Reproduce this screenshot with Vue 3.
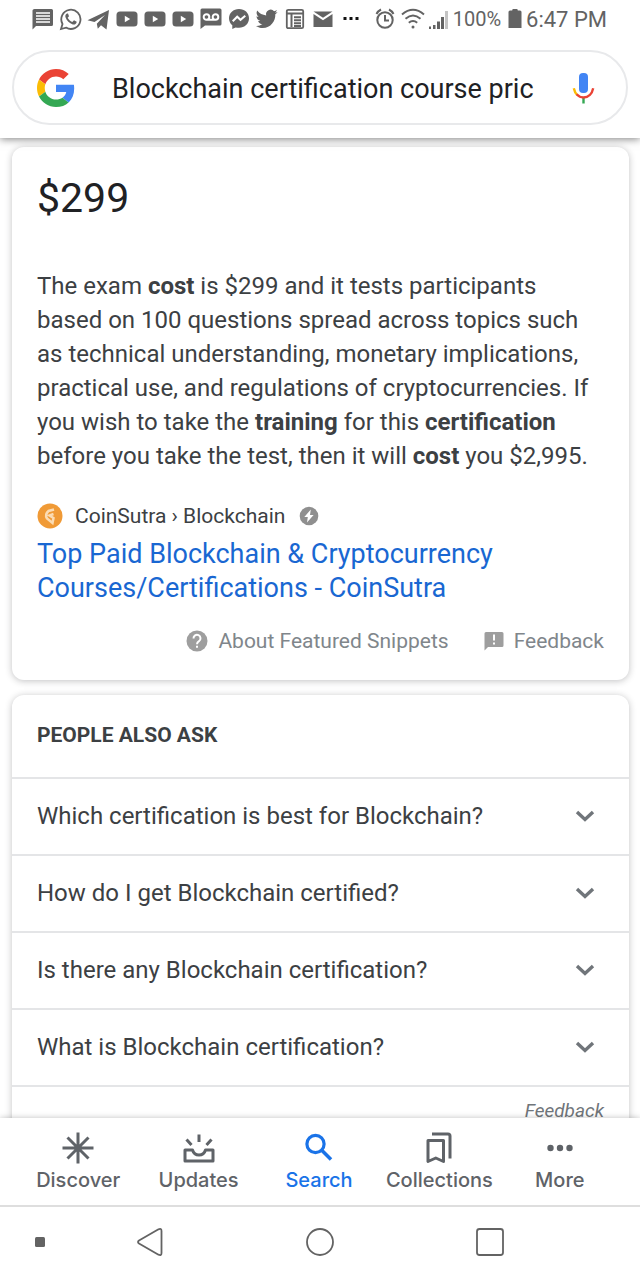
<script setup>
import { ref } from 'vue'

const query = ref('Blockchain certification course pric')
const questions = [
  'Which certification is best for Blockchain?',
  'How do I get Blockchain certified?',
  'Is there any Blockchain certification?',
  'What is Blockchain certification?',
]
</script>

<template>
  <div class="screen">
    <div class="status">
      <div class="notifications">
        <svg viewBox="0 0 24 24"><path fill="currentColor" d="M3.500 2h17q1.500 0 1.500 1.500v14q0 1.500-1.500 1.500H5l-3.500 3.500V3.500Q1.500 2 3.500 2z" /><path stroke="#fff" stroke-width="1.500" d="M5 6h14M5 9h14M5 12h14M5 15h14" /></svg>
        <svg viewBox="0 0 24 24"><path fill="none" stroke="currentColor" stroke-width="1.800" d="M2 22l1.500-5A9.600 9.600 0 1 1 7 20.600z" /><path fill="currentColor" d="M8 6.500c-1.500.8-2 2.200-1.500 3.800 1.200 3.400 4 6.100 7.300 7.100 2 .5 3.700-.5 3.900-2.700l-2.700-1.500-1.700 1.700c-2.100-.8-3.700-2.300-4.600-4.200L10 9.200 9 6.500z" /></svg>
        <svg viewBox="0 0 24 24"><path fill="currentColor" d="M.5 13.300 22 3 19.500 22.500l-5.500-4.300-3.200 3.500-1-5L18 8 7.500 15z" /></svg>
        <svg v-for="n in 3" :key="n" viewBox="0 0 24 24"><rect x="1.500" y="4.500" width="21" height="15" rx="3.500" fill="currentColor" /><path fill="#fff" d="M9.800 8.800v6.400l5.400-3.200z" /></svg>
        <svg viewBox="0 0 24 24"><path fill="currentColor" d="M3 1.500h18q1.500 0 1.500 1.500v14q0 1.500-1.500 1.500H6L1.500 22V3q0-1.500 1.500-1.500z" /><path fill="none" stroke="#fff" stroke-width="2" d="M7.500 12.800h9M7.500 7.200a2.800 2.800 0 1 0 0 5.600a2.800 2.800 0 1 0 0-5.600M16.500 7.200a2.800 2.800 0 1 0 0 5.600a2.800 2.800 0 1 0 0-5.600" /></svg>
        <svg viewBox="0 0 24 24"><path fill="currentColor" d="M12 2C6.300 2 2 6 2 11.300c0 2.900 1.300 5.400 3.300 7V22l3.300-1.600q1.600.4 3.400.4c5.700 0 10-4 10-9.500S17.700 2 12 2z" /><path fill="none" stroke="#fff" stroke-width="2" d="M5.700 14.200l4.500-4.500 3.300 3.100 4.800-4.100" /></svg>
        <svg viewBox="0 0 24 24"><path fill="currentColor" d="M22.600 4.900c-.8.4-1.700.6-2.600.7.900-.6 1.600-1.500 2-2.500-.9.500-1.900.9-2.900 1.100a4.600 4.600 0 0 0-7.900 4.200C7.400 8.200 4.500 6.400 2.200 3.600c-1.200 2.100-.6 4.800 1.400 6.200-.7 0-1.400-.2-2.100-.6 0 2.200 1.500 4.200 3.700 4.600-.7.200-1.400.2-2.100.1.600 1.800 2.300 3.100 4.300 3.200A9.200 9.200 0 0 1 .9 19c2.100 1.300 4.200 2.100 6.800 2.100 8.100 0 13-7.300 12.600-13.800.9-.6 1.700-1.500 2.300-2.400z" /></svg>
        <svg viewBox="0 0 24 24"><rect x="3.800" y="2.800" width="16.400" height="18.400" rx="1.500" fill="none" stroke="currentColor" stroke-width="1.800" /><path stroke="currentColor" stroke-width="2" fill="none" d="M4 6.500h16M8.500 7v13M11 10.200h7M11 13.200h7M11 16.200h7M11 19h7" /></svg>
        <svg viewBox="0 0 24 24"><path fill="currentColor" d="M2.500 4.500h19L12 10.800zM2.500 7l9.500 6.300L21.500 7v13h-19z" /></svg>
        <svg class="overflow" viewBox="0 0 24 24"><path fill="#111" d="M4.500 10h3v3h-3zM10.500 10h3v3h-3zM16.500 10h3v3h-3z" /></svg>
      </div>
      <div class="system">
        <svg viewBox="0 0 24 24"><circle cx="12" cy="13" r="7.700" fill="none" stroke="currentColor" stroke-width="2" /><path fill="none" stroke="currentColor" stroke-width="2" d="M12 8v5.500h4M3.500 7q1.500-3 4.500-4.500M20.500 7q-1.500-3-4.500-4.500" /></svg>
        <svg viewBox="0 0 24 24"><path fill="none" stroke="currentColor" stroke-width="2" d="M1 7.500q11-9.500 22 0M4.500 11.700q7.500-6.500 15 0M7.800 15.700q4.200-3.500 8.400 0" /><circle cx="12" cy="20" r="1.500" fill="currentColor" /></svg>
        <svg class="signal" viewBox="0 0 20 24"><path fill="currentColor" d="M0 19.500h2V22H0zM4 18h2.500v4H4zM8 14.500h3V22H8zM12 10h3v12h-3z" /><path fill="#c4c4c4" d="M16 4h3v18h-3z" /></svg>
        <span>100%</span>
        <svg class="battery" viewBox="0 0 14 24"><path fill="currentColor" d="M5 2h4q.8 0 .8 1.500H12q1.500 0 1.500 1.500v16H.5V5Q.5 3.500 2 3.500h2.200Q4.200 2 5 2z" /></svg>
        <time>6:47 PM</time>
      </div>
    </div>

    <header class="header">
      <form class="search" role="search" @submit.prevent>
        <svg class="g-logo" viewBox="0 0 48 48" role="img" aria-label="Google">
          <path fill="#ea4335" d="M24 9.500c3.540 0 6.710 1.220 9.210 3.600l6.850-6.850C35.900 2.380 30.470 0 24 0 14.620 0 6.510 5.380 2.560 13.220l7.980 6.190C12.430 13.720 17.740 9.500 24 9.500z" />
          <path fill="#4285f4" d="M46.980 24.550c0-1.570-.15-3.090-.38-4.550H24v9.020h12.940c-.58 2.960-2.260 5.480-4.780 7.180l7.730 6c4.510-4.180 7.090-10.360 7.090-17.650z" />
          <path fill="#fbbc05" d="M10.530 28.590c-.48-1.450-.76-2.990-.76-4.590s.27-3.140.76-4.590l-7.980-6.190C.92 16.460 0 20.120 0 24c0 3.880.92 7.540 2.560 10.780l7.970-6.190z" />
          <path fill="#34a853" d="M24 48c6.480 0 11.930-2.130 15.890-5.810l-7.730-6c-2.150 1.450-4.920 2.300-8.160 2.300-6.260 0-11.570-4.220-13.470-9.910l-7.980 6.190C6.510 42.620 14.620 48 24 48z" />
        </svg>
        <input v-model="query" type="text" aria-label="Search query" />
        <button type="button" class="mic" aria-label="Search by voice">
          <svg viewBox="0 0 25 32">
            <rect x="8" y="1" width="9" height="20" rx="4" fill="#4285f4" />
            <g fill="none" stroke-width="2.400">
              <path stroke="#34a853" d="M12.500 26v5.500" />
              <path stroke="#fbbc05" d="M2.800 16.200q1 4.500 3.400 6.800" />
              <path stroke="#ea4335" d="M5.600 22.300q3 3.200 6.900 3.200c5 0 8.600-4 9.700-9.300" />
            </g>
          </svg>
        </button>
      </form>
    </header>

    <main class="results">
      <article class="card snippet">
        <h1>$299</h1>
        <p>The exam <b>cost</b> is $299 and it tests participants based on 100 questions spread across topics such as technical understanding, monetary implications, practical use, and regulations of cryptocurrencies. If you wish to take the <b>training</b> for this <b>certification</b> before you take the test, then it will <b>cost</b> you $2,995.</p>
        <div class="source">
          <svg class="favicon" viewBox="0 0 26 26"><circle cx="13" cy="13" r="12.500" fill="#f09a36" /><path fill="none" stroke="#fbdcb4" stroke-width="2.500" d="M17 6.500 11.500 8q-4 3.500-1.500 7.500l5.500 4.500 1-5-4-2.500 4-1.500" /></svg>
          <span>CoinSutra › Blockchain</span>
          <svg class="amp" viewBox="0 0 20 20"><circle cx="10" cy="10" r="9.300" fill="#8f8f8f" /><path fill="#fff" d="M11.800 3.500 5.300 11h3.500l-.8 5.500L14.600 9H11z" /></svg>
        </div>
        <a class="title" href="#">Top Paid Blockchain &amp; Cryptocurrency Courses/Certifications - CoinSutra</a>
        <div class="actions">
          <a class="about" href="#">
            <svg class="help" viewBox="0 0 22 22"><circle cx="11" cy="11" r="10.500" fill="#9e9e9e" /><path fill="none" stroke="#fff" stroke-width="2" d="M7.500 8.500a3.500 3.500 0 1 1 5.500 2.700q-2 1.300-2 3" /><path fill="#fff" d="M10 15.700h2v2h-2z" /></svg>
            <span>About Featured Snippets</span>
          </a>
          <a href="#">
            <svg class="report" viewBox="0 0 20 20"><path fill="#9e9e9e" d="M2 1h16q1.500 0 1.500 1.500v12q0 1.500-1.500 1.500H4l-3.500 3.500v-17Q.5 1 2 1z" /><path fill="#fff" d="M9 3.500h2v6H9zM9 11.500h2v2H9z" /></svg>
            <span>Feedback</span>
          </a>
        </div>
      </article>

      <section class="card asks">
        <h2>PEOPLE ALSO ASK</h2>
        <button v-for="q in questions" :key="q" type="button" class="question">
          <span>{{ q }}</span>
          <svg viewBox="0 0 20 12"><path fill="none" stroke="#70757a" stroke-width="3.400" d="M2 2l8 7.500L18 2" /></svg>
        </button>
        <div class="asks-foot"><a href="#">Feedback</a></div>
      </section>
    </main>

    <nav class="tabs">
      <a href="#">
        <svg viewBox="0 0 32 32"><path stroke="currentColor" stroke-width="3" d="M16 .5v31M.5 16h31M5.500 5.500l21 21M26.500 5.500l-21 21" /></svg>
        <span>Discover</span>
      </a>
      <a href="#">
        <svg viewBox="0 0 32 32"><path fill="none" stroke="currentColor" stroke-width="3" stroke-linejoin="round" d="M2 18h7.500q1.500 5 6.500 5t6.500-5H30v11H2z" /><path stroke="currentColor" stroke-width="3" d="M16 2.500V10M3.500 7.500l5 5.500M28.500 7.500l-5 5.500" /></svg>
        <span>Updates</span>
      </a>
      <a href="#" class="active" aria-current="page">
        <svg viewBox="0 0 32 32"><circle cx="12.500" cy="12" r="8.600" fill="none" stroke="currentColor" stroke-width="3.200" /><path stroke="currentColor" stroke-width="3.600" d="M18.500 18l9.500 9.500" /></svg>
        <span>Search</span>
      </a>
      <a href="#">
        <svg viewBox="0 0 32 32"><path fill="none" stroke="currentColor" stroke-width="3" stroke-linejoin="round" d="M5 8.500h15.500v21l-7.700-3.500L5 29.500z" /><path fill="none" stroke="currentColor" stroke-width="3" d="M9 2h16q2 0 2 2v22.500" /></svg>
        <span>Collections</span>
      </a>
      <a href="#">
        <svg viewBox="0 0 32 32"><g fill="currentColor"><circle cx="6.500" cy="16" r="3.200" /><circle cx="16" cy="16" r="3.200" /><circle cx="25.500" cy="16" r="3.200" /></g></svg>
        <span>More</span>
      </a>
    </nav>

    <div class="keys">
      <button type="button" aria-label="Hide navigation"><svg viewBox="0 0 30 30"><rect x="10" y="10" width="10" height="10" rx="1.500" fill="#636363" /></svg></button>
      <button type="button" aria-label="Back"><svg viewBox="0 0 30 30"><path fill="none" stroke="#636363" stroke-width="1.800" stroke-linejoin="round" d="M23.500 2.300Q26.500 1 26.500 4v22q0 3-3 1.700L4 16.500q-2-1.500 0-3z" /></svg></button>
      <button type="button" aria-label="Home"><svg viewBox="0 0 30 30"><circle cx="15" cy="15" r="13" fill="none" stroke="#636363" stroke-width="1.800" /></svg></button>
      <button type="button" aria-label="Recent apps"><svg viewBox="0 0 30 30"><rect x="2" y="2" width="26" height="26" rx="2.500" fill="none" stroke="#636363" stroke-width="1.800" /></svg></button>
    </div>
  </div>
</template>

<style>
body {
  margin: 0;
  background: #fff;
}
</style>

<style scoped>
* {
  box-sizing: border-box;
}
.screen {
  display: flex;
  flex-direction: column;
  height: 100vh;
  overflow: hidden;
  background: #fff;
  color: #3c4043;
  font-family: Roboto, 'Liberation Sans', sans-serif;
}
svg {
  display: block;
  flex: none;
}
a {
  color: inherit;
  text-decoration: none;
}
button {
  padding: 0;
  border: 0;
  background: none;
  color: inherit;
  font: inherit;
}
.status {
  display: flex;
  justify-content: space-between;
  align-items: center;
  flex: none;
  height: 38px;
  padding: 0 33px 0 31px;
  color: #636363;
  font-size: 20px;
  position: relative;
  z-index: 2;
}
.notifications,
.system {
  display: flex;
  align-items: center;
  gap: 4px;
}
.status svg {
  width: 24px;
  height: 24px;
}
.status .signal {
  width: 20px;
}
.status .battery {
  width: 14px;
  margin-left: 3px;
}
.status time {
  font-size: 22px;
}
.header {
  flex: none;
  position: relative;
  z-index: 1;
  padding: 12px 12px 13px;
  background: #fff;
  box-shadow: 0 1px 8px rgba(0, 0, 0, 0.5);
  clip-path: inset(0 0 -16px 0);
}
.search {
  display: flex;
  align-items: center;
  height: 75px;
  padding: 0 30px 0 23px;
  border: 2px solid #e8e9eb;
  border-radius: 38px;
}
.g-logo {
  width: 38px;
  height: 38px;
}
.search input {
  flex: 1;
  min-width: 0;
  margin: 0 33px 0 37px;
  padding: 2px 0 0;
  border: 0;
  outline: 0;
  background: none;
  color: #202124;
  font: 27px/36px Roboto, 'Liberation Sans', sans-serif;
}
.mic svg {
  width: 25px;
  height: 32px;
}
.results {
  flex: 1;
  min-height: 0;
  overflow: hidden;
  display: flex;
  flex-direction: column;
  gap: 15px;
  padding: 9px 11px 0 12px;
}
.card {
  flex: none;
  border-radius: 12px;
  background: #fff;
  box-shadow: 0 1px 7px rgba(32, 33, 36, 0.28);
}
.snippet {
  padding: 27px 25px 25px;
}
h1 {
  margin: 0 0 47px;
  color: #202124;
  font-size: 41px;
  font-weight: 400;
  line-height: 48px;
}
p {
  margin: 0;
  font-size: 24px;
  line-height: 34px;
}
.source {
  display: flex;
  align-items: center;
  margin: 29px 0 7px;
  font-size: 21px;
  line-height: 28px;
}
.favicon {
  width: 26px;
  height: 26px;
  margin-right: 12px;
}
.amp {
  width: 20px;
  height: 20px;
  margin-left: 14px;
}
.title {
  display: block;
  color: #1967d2;
  font-size: 27px;
  line-height: 34px;
}
.actions {
  display: flex;
  justify-content: flex-end;
  gap: 35px;
  margin-top: 22px;
  color: #80868b;
  font-size: 21px;
  line-height: 28px;
}
.actions a {
  display: flex;
  align-items: center;
  gap: 10px;
}
.help {
  width: 22px;
  height: 22px;
}
.report {
  width: 20px;
  height: 20px;
}
h2 {
  margin: 0;
  padding: 0 25px 2px;
  font-size: 21px;
  font-weight: 700;
  line-height: 80px;
}
.question {
  display: flex;
  justify-content: space-between;
  align-items: center;
  width: 100%;
  height: 77px;
  padding: 0 34px 2px 25px;
  border-top: 2px solid #e4e5e7;
  font-size: 24px;
  line-height: 34px;
  text-align: left;
}
.question svg {
  width: 20px;
  height: 12px;
}
.asks-foot {
  padding: 10px 25px 12px;
  border-top: 2px solid #e4e5e7;
  color: #70757a;
  font-size: 19px;
  font-style: italic;
  line-height: 28px;
  text-align: right;
}
.tabs {
  display: grid;
  grid-template-columns: repeat(5, 1fr);
  flex: none;
  position: relative;
  z-index: 1;
  height: 89px;
  padding: 14px 20px 0 18px;
  border-bottom: 2px solid #dedede;
  background: #fff;
  box-shadow: 0 0 6px rgba(0, 0, 0, 0.25);
  color: #5f6368;
  font: 500 20px/28px Inter, Roboto, sans-serif;
}
.tabs a {
  display: flex;
  flex-direction: column;
  align-items: center;
  gap: 2px;
}
.tabs svg {
  width: 32px;
  height: 32px;
}
.tabs .active {
  color: #1a73e8;
}
.keys {
  display: grid;
  grid-template-columns: 50px repeat(3, 1fr);
  flex: none;
  position: relative;
  z-index: 2;
  height: 73px;
  padding: 0 65px 3px 15px;
  background: #fff;
}
.keys button {
  display: grid;
  place-items: center;
}
.keys svg {
  width: 30px;
  height: 30px;
}
</style>
